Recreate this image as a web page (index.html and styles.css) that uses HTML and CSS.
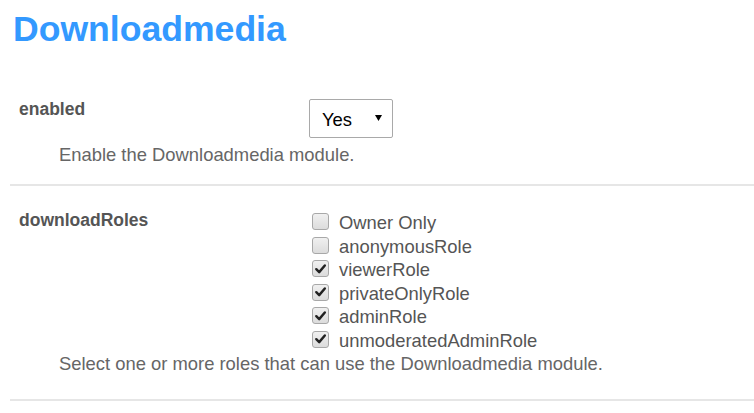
FILE: index.html
```html
<!DOCTYPE html>
<html>
<head>
<meta charset="utf-8">
<link rel="stylesheet" href="styles.css">
</head>
<body>
<div class="page">
  <h1 class="title">Downloadmedia</h1>

  <div class="setting">
    <div class="row">
      <div class="label">enabled</div>
      <div class="control">
        <div class="select"><span>Yes</span><svg class="arrow" width="7" height="6" viewBox="0 0 7 6"><polygon points="0,0 7,0 3.5,6" fill="#000"/></svg></div>
      </div>
    </div>
    <div class="desc desc-first">Enable the Downloadmedia module.</div>
  </div>

  <div class="setting">
    <div class="row">
      <div class="label">downloadRoles</div>
      <div class="control">
        <ul class="checks">
          <li><span class="box"></span>Owner Only</li>
          <li><span class="box"></span>anonymousRole</li>
          <li><span class="box checked"><svg viewBox="0 0 16 16" width="16" height="16"><path d="M3.5 8.2 L6.6 11.3 L12.6 4.2" fill="none" stroke="#222" stroke-width="2.6" stroke-linecap="round" stroke-linejoin="round"/></svg></span>viewerRole</li>
          <li><span class="box checked"><svg viewBox="0 0 16 16" width="16" height="16"><path d="M3.5 8.2 L6.6 11.3 L12.6 4.2" fill="none" stroke="#222" stroke-width="2.6" stroke-linecap="round" stroke-linejoin="round"/></svg></span>privateOnlyRole</li>
          <li><span class="box checked"><svg viewBox="0 0 16 16" width="16" height="16"><path d="M3.5 8.2 L6.6 11.3 L12.6 4.2" fill="none" stroke="#222" stroke-width="2.6" stroke-linecap="round" stroke-linejoin="round"/></svg></span>adminRole</li>
          <li><span class="box checked"><svg viewBox="0 0 16 16" width="16" height="16"><path d="M3.5 8.2 L6.6 11.3 L12.6 4.2" fill="none" stroke="#222" stroke-width="2.6" stroke-linecap="round" stroke-linejoin="round"/></svg></span>unmoderatedAdminRole</li>
        </ul>
      </div>
    </div>
    <div class="desc desc-second">Select one or more roles that can use the Downloadmedia module.</div>
  </div>
</div>
</body>
</html>
```

FILE: styles.css
```css
html, body {
  margin: 0;
  padding: 0;
  background: #fff;
}

body {
  font-family: "Liberation Sans", Arial, sans-serif;
  color: #555;
}

.page {
  padding-left: 10px;
}

.title {
  margin: 9px 0 0 3px;
  font-size: 35.6px;
  line-height: 40px;
  font-weight: bold;
  color: #3399ff;
}

.setting {
  border-bottom: 2px solid #e6e6e6;
}

.setting:first-of-type {
  margin-top: 50px;
}

.row {
  display: flex;
  align-items: flex-start;
}

.setting + .setting .row {
  padding-top: 24px;
}

.label {
  width: 290px;
  padding-left: 9px;
  font-size: 17.5px;
  line-height: 20px;
  font-weight: bold;
  color: #555;
}

.control {
  display: flex;
  flex-direction: column;
}

.select {
  box-sizing: border-box;
  width: 84px;
  height: 39px;
  border: 1px solid #a9a9a9;
  border-radius: 2px;
  display: flex;
  align-items: center;
  justify-content: space-between;
  padding: 0 10px 0 12px;
  font-size: 18.4px;
  color: #000;
  background: #fff;
}

.select span {
  padding-top: 2px;
}

.arrow {
  margin-top: -2px;
}

.checks {
  list-style: none;
  margin: 1px 0 0 3px;
  padding: 0;
}

.checks li {
  display: flex;
  align-items: flex-start;
  font-size: 18.4px;
  line-height: 23.5px;
  height: 23.5px;
  color: #555;
}

.box {
  box-sizing: border-box;
  width: 17px;
  height: 17px;
  margin-top: 2px;
  margin-right: 10px;
  border: 1px solid #a8a8a8;
  border-radius: 3px;
  background: linear-gradient(#f0f0f0, #dcdcdc);
  display: flex;
  align-items: center;
  justify-content: center;
  flex: none;
}

.box svg {
  display: block;
}

.desc {
  padding-left: 49px;
  font-size: 18.4px;
  line-height: 22px;
  color: #666;
}

.desc-first {
  margin-top: 6px;
  padding-bottom: 18px;
}

.desc-second {
  margin-top: 1px;
  padding-bottom: 24px;
}
```
